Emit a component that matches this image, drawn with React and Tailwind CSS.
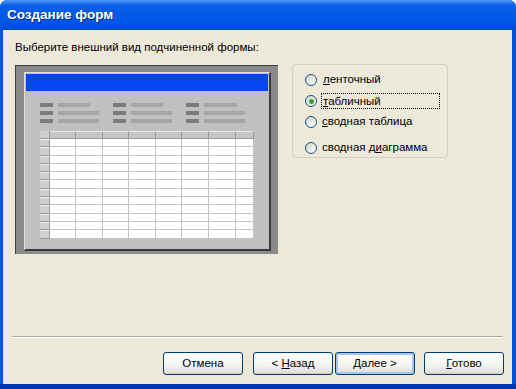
import React from 'react';

const font = { fontFamily: '"Liberation Sans", Arial, sans-serif' };

const fieldGroups = [
    { left: 16, bars: [32, 41, 41] },
    { left: 89, bars: [32, 41, 41] },
    { left: 163, bars: [33, 41, 41] },
];

const colWidths = [26, 27, 26, 27, 26, 27, 27, 18];

function Preview() {
    return (
        <div className="w-[263px] h-[189px] bg-[#8a8a8a] border-t border-l border-[#404040] pl-[8px] pt-[6px]">
            <div className="w-[247px] h-[179px] bg-[#c0c0c0] border-r-2 border-b-2 border-[#3a3a3a] border-t border-l border-t-[#e0e0e0] border-l-[#e0e0e0] overflow-hidden">
                <div className="mx-[1px] mt-[1px] h-[17px] bg-[#0645f0]" />
                <div className="flex mt-[12px] pl-[15px] gap-[14px]">
                    {fieldGroups.map((g, i) => (
                        <div key={i} className="flex flex-col gap-[4px]">
                            {g.bars.map((w, j) => (
                                <div key={j} className="flex gap-[5px] h-[4px]">
                                    <div className="w-[13px] bg-[#7c7c7c]" />
                                    <div className="bg-[#a6a6a6]" style={{ width: w }} />
                                </div>
                            ))}
                        </div>
                    ))}
                </div>
                <div className="ml-[15px] mt-[8px] w-[214px]">
                    <div className="flex h-[8px]">
                        <div className="w-[10px] bg-[#cfcfcf] border-r border-b border-[#9a9a9a]" />
                        {colWidths.map((w, i) => (
                            <div key={i} className="bg-[#c6c6c6] border-r border-b border-[#9a9a9a] border-t border-t-[#e8e8e8]" style={{ width: w }} />
                        ))}
                    </div>
                    {Array.from({ length: 12 }).map((_, r) => (
                        <div key={r} className="flex h-[8.3px]">
                            <div className="w-[10px] bg-[#cfcfcf] border-r border-b border-[#9a9a9a] border-t border-t-[#ececec]" />
                            {colWidths.map((w, i) => (
                                <div key={i} className="bg-white border-r border-b border-[#c4c4c4]" style={{ width: w }} />
                            ))}
                        </div>
                    ))}
                </div>
            </div>
        </div>
    );
}

function Radio({ checked }) {
    return (
        <span className="w-[12px] h-[12px] rounded-full border border-[#1c5180] bg-[linear-gradient(135deg,#d4d4cc,#ffffff)] flex items-center justify-center shrink-0">
            {checked ? <span className="w-[5px] h-[5px] rounded-full bg-[#2aa52a]" /> : null}
        </span>
    );
}

function Button({ children, def }) {
    return (
        <button
            className={
                'w-[80px] h-[23px] rounded-[3px] border border-[#003c74] text-[11.5px] text-black bg-[linear-gradient(180deg,#ffffff,#f3f3ef_60%,#dcdcd4)] ' +
                (def ? 'shadow-[inset_0_0_0_2px_#a8c4f0]' : 'shadow-[inset_0_-1px_0_#d0d0c6]')
            }
            style={font}
        >
            {children}
        </button>
    );
}

export default function App() {
    return (
        <div className="w-[516px] h-[389px] bg-[#0052e0] rounded-t-[7px] flex flex-col border-b-[5px] border-[#0035b0]" style={font}>
            <div className="h-[30px] rounded-t-[7px] bg-[linear-gradient(180deg,#4f98f8_0%,#0a5fe9_18%,#0057e6_70%,#004ad6_100%)] flex items-center pl-[7px]">
                <span className="text-white font-bold text-[13.5px] [text-shadow:1px_1px_0_#0a2a80]">Создание форм</span>
            </div>
            <div className="flex-1 ml-[3px] mr-[4px] bg-[#ece9d8] flex flex-col">
                <div className="pl-[12px] pt-[10px] text-[11.5px] text-black leading-[14px]">
                    Выберите внешний вид подчиненной формы:
                </div>
                <div className="flex pl-[12px] pt-[11px] gap-[14px] items-start">
                    <Preview />
                    <div className="w-[156px] h-[94px] -mt-[1px] rounded-[4px] border border-[#d0d0bf] pl-[12px] text-[11.5px] text-black">
                        <div className="flex items-center gap-[6px] mt-[8px] h-[14px]">
                            <Radio />
                            <span><u>л</u>енточный</span>
                        </div>
                        <div className="flex items-center gap-[4px] mt-[7px] h-[14px]">
                            <Radio checked />
                            <span className="border border-dotted border-black w-[119px] h-[16px] pl-[1px] leading-[14px]"><u>т</u>абличный</span>
                        </div>
                        <div className="flex items-center gap-[4px] mt-[7px] h-[14px]">
                            <Radio />
                            <span className="pl-[1px]"><u>с</u>водная таблица</span>
                        </div>
                        <div className="flex items-center gap-[4px] mt-[12px] h-[14px]">
                            <Radio />
                            <span className="pl-[1px]">сводная д<u>и</u>аграмма</span>
                        </div>
                    </div>
                </div>
                <div className="flex-1" />
                <div className="mx-[9px] border-t border-[#aca899] border-b border-b-white" />
                <div className="flex justify-end pr-[8px] pt-[14px] pb-[9px]">
                    <Button>Отмена</Button>
                    <div className="w-[10px]" />
                    <Button>&lt; <u>Н</u>азад</Button>
                    <div className="w-[2px]" />
                    <Button def><u>Д</u>алее &gt;</Button>
                    <div className="w-[9px]" />
                    <Button><u>Г</u>отово</Button>
                </div>
            </div>
        </div>
    );
}
